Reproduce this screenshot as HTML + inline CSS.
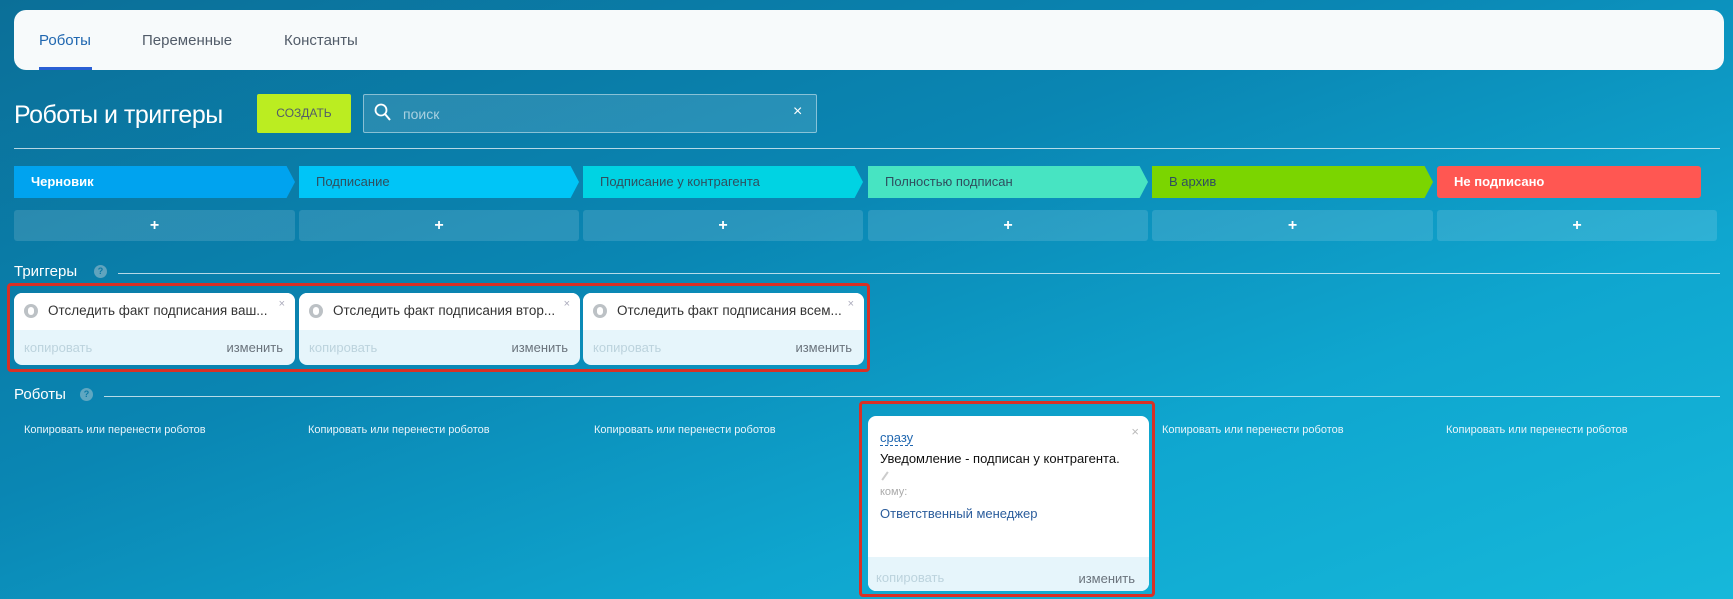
<!DOCTYPE html><html><head><meta charset="utf-8"><style>
*{box-sizing:border-box;margin:0;padding:0}
body{width:1733px;height:599px;overflow:hidden;font-family:"Liberation Sans",sans-serif;position:relative;
background:linear-gradient(160deg,#0b6f98 0%,#0a86b3 40%,#0fa6cf 70%,#16b8da 100%)}
.a{position:absolute}
.tabs{left:14px;top:10px;width:1710px;height:60px;background:#f7fafb;border-radius:12px}
.tab{top:32px;font-size:15px;color:#525c69}
.stage{top:166px;height:32px;font-size:13px;line-height:32px;padding-left:17px;color:#2f4f5f}
.plus{top:210px;height:31px;background:rgba(255,255,255,.13);border-radius:3px;color:#fff;font-size:16px;font-weight:bold;text-align:center;line-height:31px}
.hd{font-size:15px;color:#fff}
.q{width:13px;height:13px;border-radius:50%;background:rgba(200,210,215,.45);color:#0b7aa5;font-size:9px;font-weight:bold;text-align:center;line-height:13px}
.ln{height:1px;background:rgba(255,255,255,.7)}
.card{top:293px;height:72px;width:281px;background:#e6f5fb;border-radius:8px;overflow:hidden}
.card .t{height:37px;background:#fff;padding:10px 0 0 34px;font-size:13.5px;color:#333}
.card .ic{left:10px;top:11px;width:14px;height:14px;border-radius:50%;background:#bcc1c5}
.card .ic:after{content:"";position:absolute;left:4px;top:3px;width:6px;height:8px;border-radius:3px;background:#fff}
.card .x{right:10px;top:5px;color:#aab;font-size:11px}
.cp{font-size:13px;color:#bcd3dd}
.ch{font-size:13px;color:#6a737c}
.cr{top:424px;font-size:11px;color:#e8f4fa}
</style></head><body>
<div class="a tabs"></div>
<div class="a tab" style="left:39px;color:#2067b0">Роботы</div>
<div class="a" style="left:39px;top:67px;width:53px;height:3px;background:#2a5fd4"></div>
<div class="a tab" style="left:142px">Переменные</div>
<div class="a tab" style="left:284px">Константы</div>
<div class="a" style="left:14px;top:101px;font-size:25px;color:#fff;letter-spacing:-0.5px">Роботы и триггеры</div>
<div class="a" style="left:257px;top:94px;width:94px;height:39px;background:#bbed21;border-radius:2px;color:#535c69;font-size:12px;text-align:center;line-height:39px">СОЗДАТЬ</div>
<div class="a" style="left:363px;top:94px;width:454px;height:39px;border:1px solid rgba(255,255,255,.45);background:rgba(255,255,255,.12);border-radius:2px"></div>
<svg class="a" style="left:374px;top:103px" width="18" height="20"><circle cx="7" cy="7" r="5.5" fill="none" stroke="#fff" stroke-width="1.8"/><path d="M11 11l5 6" stroke="#fff" stroke-width="2"/></svg>
<div class="a" style="left:403px;top:106px;font-size:14px;color:rgba(255,255,255,.6)">поиск</div>
<div class="a" style="left:793px;top:103px;font-size:16px;color:#fff">×</div>
<div class="a ln" style="left:14px;top:148px;width:1706px"></div>

<div class="a stage" style="left:14px;width:281px;background:#00a3ef;color:#fff;font-weight:bold;clip-path:polygon(0 0,97% 0,100% 50%,97% 100%,0 100%)">Черновик</div>
<div class="a stage" style="left:299px;width:280px;background:#00c5f7;clip-path:polygon(0 0,97% 0,100% 50%,97% 100%,0 100%)">Подписание</div>
<div class="a stage" style="left:583px;width:280px;background:#00d3e3;clip-path:polygon(0 0,97% 0,100% 50%,97% 100%,0 100%)">Подписание у контрагента</div>
<div class="a stage" style="left:868px;width:280px;background:#47e4c2;clip-path:polygon(0 0,97% 0,100% 50%,97% 100%,0 100%)">Полностью подписан</div>
<div class="a stage" style="left:1152px;width:281px;background:#7bd500;clip-path:polygon(0 0,97% 0,100% 50%,97% 100%,0 100%)">В архив</div>
<div class="a stage" style="left:1437px;width:264px;background:#ff5752;color:#fff;font-weight:bold;border-radius:3px">Не подписано</div>

<div class="a plus" style="left:14px;width:281px">+</div>
<div class="a plus" style="left:299px;width:280px">+</div>
<div class="a plus" style="left:583px;width:280px">+</div>
<div class="a plus" style="left:868px;width:280px">+</div>
<div class="a plus" style="left:1152px;width:281px">+</div>
<div class="a plus" style="left:1437px;width:280px">+</div>

<div class="a hd" style="left:14px;top:263px">Триггеры</div>
<div class="a q" style="left:94px;top:265px">?</div>
<div class="a ln" style="left:118px;top:273px;width:1602px"></div>
<div class="a" style="left:7px;top:283px;width:863px;height:89px;border:3px solid #d93025;border-radius:4px"></div>

<div class="a card" style="left:14px"><div class="t">Отследить факт подписания ваш...</div><div class="a ic"></div><div class="a x">×</div><div class="a cp" style="left:10px;top:47px">копировать</div><div class="a ch" style="right:12px;top:47px">изменить</div></div>
<div class="a card" style="left:299px"><div class="t">Отследить факт подписания втор...</div><div class="a ic"></div><div class="a x">×</div><div class="a cp" style="left:10px;top:47px">копировать</div><div class="a ch" style="right:12px;top:47px">изменить</div></div>
<div class="a card" style="left:583px"><div class="t">Отследить факт подписания всем...</div><div class="a ic"></div><div class="a x">×</div><div class="a cp" style="left:10px;top:47px">копировать</div><div class="a ch" style="right:12px;top:47px">изменить</div></div>

<div class="a hd" style="left:14px;top:386px">Роботы</div>
<div class="a q" style="left:80px;top:388px">?</div>
<div class="a ln" style="left:104px;top:396px;width:1616px"></div>

<div class="a cr" style="left:24px">Копировать или перенести роботов</div>
<div class="a cr" style="left:308px">Копировать или перенести роботов</div>
<div class="a cr" style="left:594px">Копировать или перенести роботов</div>
<div class="a cr" style="left:1162px">Копировать или перенести роботов</div>
<div class="a cr" style="left:1446px">Копировать или перенести роботов</div>

<div class="a" style="left:859px;top:401px;width:296px;height:196px;border:3px solid #d93025;border-radius:4px"></div>
<div class="a" style="left:868px;top:416px;width:281px;height:175px;background:#fff;border-radius:8px;overflow:hidden">
<div class="a" style="left:12px;top:14px;font-size:13px;color:#2067b0;border-bottom:1px dashed #2067b0">сразу</div>
<div class="a" style="right:10px;top:8px;font-size:13px;color:#bbb">×</div>
<div class="a" style="left:12px;top:35px;font-size:13px;color:#111">Уведомление - подписан у контрагента.</div>
<div class="a" style="left:16px;top:55px;width:2px;height:10px;background:#ccc;transform:rotate(35deg)"></div>
<div class="a" style="left:12px;top:70px;font-size:11px;color:#aaa">кому:</div>
<div class="a" style="left:12px;top:90px;font-size:13px;color:#2b5d9c">Ответственный менеджер</div>
<div class="a" style="left:0;top:141px;width:281px;height:34px;background:#e6f5fb"></div>
<div class="a cp" style="left:8px;top:154px">копировать</div>
<div class="a ch" style="right:14px;top:155px">изменить</div>
</div>
</body></html>
